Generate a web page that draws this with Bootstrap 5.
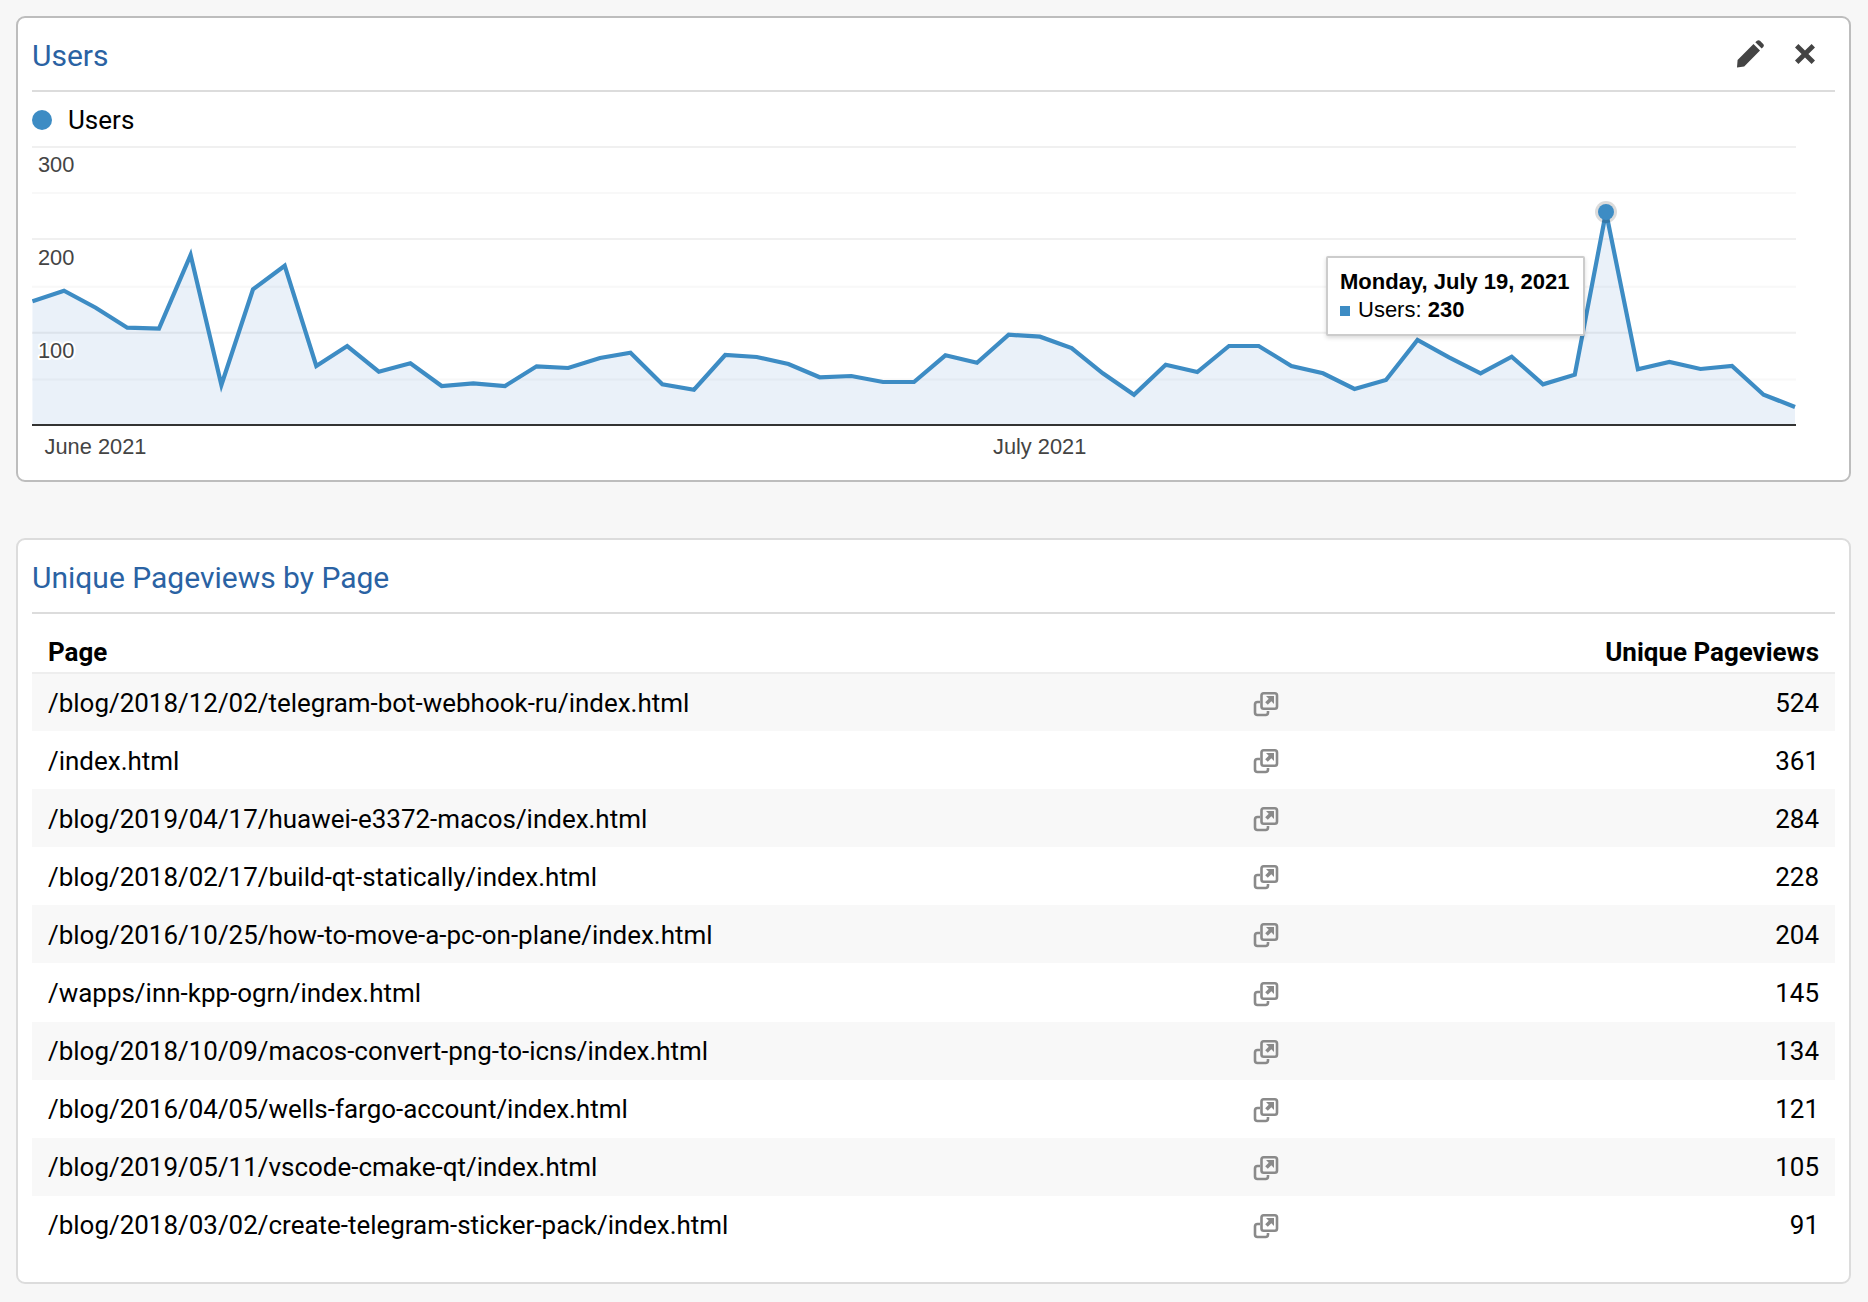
<!DOCTYPE html>
<html lang="en">
<head>
<meta charset="utf-8">
<title>Users dashboard</title>
<link href="https://cdn.jsdelivr.net/npm/bootstrap@5.3.0/dist/css/bootstrap.min.css" rel="stylesheet">
<style>
html,body{height:100%}
body{background:#f7f7f7;font-family:Roboto,"Liberation Sans",sans-serif;color:#000;padding:16px 17px 0 16px;overflow:hidden}
.panel{background:#fff;border:2px solid #bdbdbd;border-radius:9px;padding:0 14px;--bs-card-bg:#fff}
.panel-light{border-color:#dcdcdc;margin-top:56px;padding-bottom:28px}
.panel-head{height:74px;border-bottom:2px solid #dcdcdc}
.panel-title{font-size:30px;font-weight:400;color:#2a62a3;margin:4px 0 0;line-height:1}
.tool{display:block}
.tools{gap:30px;padding-right:19px}
.legend{height:54px;font-size:26px;gap:16px;padding-top:3px}
.legend i{width:20px;height:20px;border-radius:50%;background:#3d8cc4;display:block;margin-top:-1px}
.chart{height:334px}
.chart svg{display:block}
.chart text{font-family:"Liberation Sans",Arial,sans-serif;font-size:21.8px;fill:#444}
.chart .halo{stroke:#fff;stroke-width:4px;paint-order:stroke;stroke-linejoin:round}
.tip{position:absolute;left:1294px;top:110px;width:259px;height:80px;background:#fff;border:2px solid #ccc;border-radius:2px;box-shadow:0 2px 4px rgba(0,0,0,.15);padding:10px 12px;font-family:"Liberation Sans",Arial,sans-serif;font-size:22px;line-height:28px;white-space:nowrap}
.tip b{font-weight:700}
.tip i{display:inline-block;width:10px;height:10px;background:#3d8cc4;margin-right:8px;vertical-align:1px}
.pages{--bs-table-bg:transparent;--bs-table-striped-bg:#f8f8f8;--bs-table-striped-color:#000;--bs-table-color:#000;margin:0;font-size:25.96px;table-layout:fixed}
.pages th,.pages td{border:0;padding:0 16px;vertical-align:middle}
.pages th{height:59px;padding-top:19px;font-weight:700;border-bottom:2px solid #eee}
.pages td{height:58.1px;padding-top:2px}
.c-page{width:1204px}
.c-icon{width:60px}
.ext{display:block;margin:0 auto}
</style>
</head>
<body>
<div class="panel card">
  <div class="panel-head d-flex align-items-center justify-content-between">
    <h2 class="panel-title">Users</h2>
    <div class="tools d-flex align-items-center">
      <svg class="tool" width="28" height="28" viewBox="0 0 28 28" aria-hidden="true"><path fill="#444" d="M1 27.5 1.6 20 17.5 4 24 10.5 8.2 26.6ZM19.3 2.3 21 .8c1-.8 2.1-.8 3 0l3.2 3.1c.9.9.9 2.2 0 3.1L25.7 8.6Z"/></svg>
      <svg class="tool" width="22" height="22" viewBox="0 0 22 22" aria-hidden="true"><path fill="#444" d="M4.4 1 11 7.6 17.6 1 21 4.4 14.4 11 21 17.6 17.6 21 11 14.4 4.4 21 1 17.6 7.6 11 1 4.4Z"/></svg>
    </div>
  </div>
  <div class="legend d-flex align-items-center"><i></i><span>Users</span></div>
  <div class="chart position-relative">
    <svg width="1803" height="334" viewBox="32 146 1803 334" aria-label="Users line chart">
      <g stroke-width="2">
        <path stroke="#f0f0f0" d="M32 147H1796M32 239H1796M32 332.8H1796"/>
        <path stroke="#f8f8f8" d="M32 193H1796M32 286.8H1796M32 379.4H1796"/>
      </g>
      <text x="38" y="172">300</text>
      <text x="38" y="265">200</text>
      <polygon fill="#3d7cc4" fill-opacity=".11" points="32.4,424 32.4,301.3 64,290.7 95.7,307.7 127.3,327.7 159,328.7 190.6,255 221.4,385 253,289.3 284.7,265.7 316.3,366 347.2,346 378.8,371.7 410.4,363.3 441.7,386 473.3,383.3 505,386 536.6,366.3 568.2,368 600,358 630.5,352.7 662.3,384.3 694,389.7 725.2,355 756.8,357 788.4,364 819.7,377.3 851.3,376 883,382 914,382 945.4,355.3 977,362.7 1008.7,334.7 1040,336.7 1071.6,348 1102.8,373.3 1134,394.7 1165.7,364.7 1197.3,372 1229,346 1258.7,346 1291.4,366 1323,373.3 1354.5,389 1386,380 1417.5,340 1449,357.3 1480.6,373.3 1511.7,356.7 1543,384.3 1574.8,374.7 1606,212 1637.9,369.3 1669.4,362 1700.5,369 1732,366 1763.6,394.7 1795,407 1795,424"/>
      <polyline fill="none" stroke="#3d8cc4" stroke-width="4.2" stroke-linejoin="miter" points="32.4,301.3 64,290.7 95.7,307.7 127.3,327.7 159,328.7 190.6,255 221.4,385 253,289.3 284.7,265.7 316.3,366 347.2,346 378.8,371.7 410.4,363.3 441.7,386 473.3,383.3 505,386 536.6,366.3 568.2,368 600,358 630.5,352.7 662.3,384.3 694,389.7 725.2,355 756.8,357 788.4,364 819.7,377.3 851.3,376 883,382 914,382 945.4,355.3 977,362.7 1008.7,334.7 1040,336.7 1071.6,348 1102.8,373.3 1134,394.7 1165.7,364.7 1197.3,372 1229,346 1258.7,346 1291.4,366 1323,373.3 1354.5,389 1386,380 1417.5,340 1449,357.3 1480.6,373.3 1511.7,356.7 1543,384.3 1574.8,374.7 1606,212 1637.9,369.3 1669.4,362 1700.5,369 1732,366 1763.6,394.7 1795,407"/>
      <path stroke="#333" stroke-width="2" d="M32 425H1796"/>
      <text class="halo" x="38" y="358">100</text>
      <circle cx="1606" cy="212" r="11" fill="#000" fill-opacity=".14"/>
      <circle cx="1606" cy="212" r="8" fill="#3d8cc4"/>
      <text x="44.6" y="453.5">June 2021</text>
      <text x="993" y="453.5">July 2021</text>
    </svg>
    <div class="tip"><b>Monday, July 19, 2021</b><br><i></i>Users: <b>230</b></div>
  </div>
</div>
<div class="panel panel-light card">
  <div class="panel-head d-flex align-items-center"><h2 class="panel-title">Unique Pageviews by Page</h2></div>
  <table class="table table-striped pages">
    <colgroup><col class="c-page"><col class="c-icon"><col></colgroup>
    <thead><tr><th>Page</th><th></th><th class="text-end">Unique Pageviews</th></tr></thead>
    <tbody id="rows">
      <tr><td>/blog/2018/12/02/telegram-bot-webhook-ru/index.html</td><td><svg class="ext" width="26" height="26" viewBox="0 0 26 26" aria-hidden="true"><use href="#ext"/></svg></td><td class="text-end">524</td></tr>
      <tr><td>/index.html</td><td><svg class="ext" width="26" height="26" viewBox="0 0 26 26" aria-hidden="true"><use href="#ext"/></svg></td><td class="text-end">361</td></tr>
      <tr><td>/blog/2019/04/17/huawei-e3372-macos/index.html</td><td><svg class="ext" width="26" height="26" viewBox="0 0 26 26" aria-hidden="true"><use href="#ext"/></svg></td><td class="text-end">284</td></tr>
      <tr><td>/blog/2018/02/17/build-qt-statically/index.html</td><td><svg class="ext" width="26" height="26" viewBox="0 0 26 26" aria-hidden="true"><use href="#ext"/></svg></td><td class="text-end">228</td></tr>
      <tr><td>/blog/2016/10/25/how-to-move-a-pc-on-plane/index.html</td><td><svg class="ext" width="26" height="26" viewBox="0 0 26 26" aria-hidden="true"><use href="#ext"/></svg></td><td class="text-end">204</td></tr>
      <tr><td>/wapps/inn-kpp-ogrn/index.html</td><td><svg class="ext" width="26" height="26" viewBox="0 0 26 26" aria-hidden="true"><use href="#ext"/></svg></td><td class="text-end">145</td></tr>
      <tr><td>/blog/2018/10/09/macos-convert-png-to-icns/index.html</td><td><svg class="ext" width="26" height="26" viewBox="0 0 26 26" aria-hidden="true"><use href="#ext"/></svg></td><td class="text-end">134</td></tr>
      <tr><td>/blog/2016/04/05/wells-fargo-account/index.html</td><td><svg class="ext" width="26" height="26" viewBox="0 0 26 26" aria-hidden="true"><use href="#ext"/></svg></td><td class="text-end">121</td></tr>
      <tr><td>/blog/2019/05/11/vscode-cmake-qt/index.html</td><td><svg class="ext" width="26" height="26" viewBox="0 0 26 26" aria-hidden="true"><use href="#ext"/></svg></td><td class="text-end">105</td></tr>
      <tr><td>/blog/2018/03/02/create-telegram-sticker-pack/index.html</td><td><svg class="ext" width="26" height="26" viewBox="0 0 26 26" aria-hidden="true"><use href="#ext"/></svg></td><td class="text-end">91</td></tr>
    </tbody>
  </table>
</div>
<svg width="0" height="0" class="position-absolute" aria-hidden="true"><defs><g id="ext"><path fill="none" stroke="#8a8a8a" stroke-width="2.6" d="M7 11H4.500A2.500 2.500 0 0 0 2 13.500v8A2.500 2.500 0 0 0 4.500 24h8a2.500 2.500 0 0 0 2.500-2.500V20"/><rect x="8.500" y="2.200" width="15.500" height="15.500" rx="2.200" fill="none" stroke="#8a8a8a" stroke-width="2.600"/><path fill="#8a8a8a" d="M13 5h8v8l-2.700-2.700-3.500 3.500-2.600-2.600 3.500-3.500Z"/></g></defs></svg>
<script src="https://cdn.jsdelivr.net/npm/bootstrap@5.3.0/dist/js/bootstrap.bundle.min.js"></script>
</body>
</html>
